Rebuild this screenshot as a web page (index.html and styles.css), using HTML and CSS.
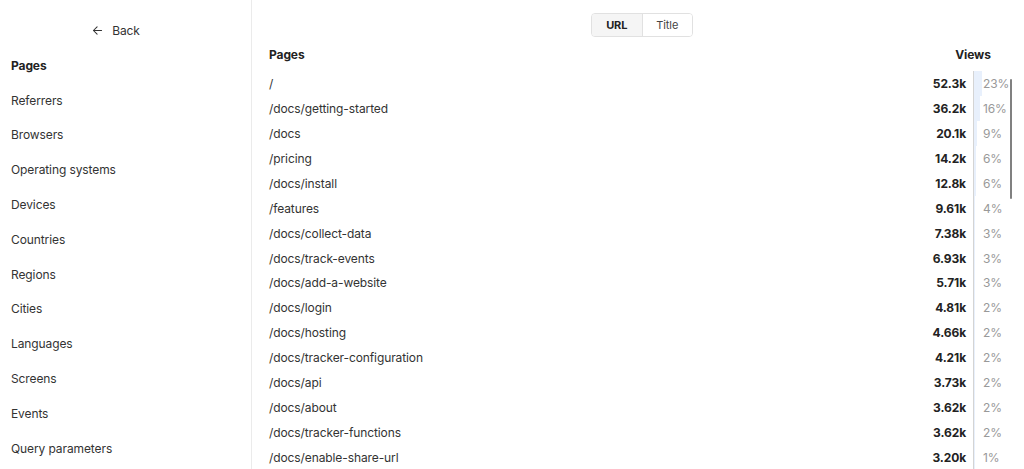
FILE: index.html
```html
<!DOCTYPE html>
<html lang="en">
<head>
<meta charset="utf-8">
<title>Pages</title>
<link rel="stylesheet" href="styles.css">
</head>
<body>
<div class="app">
  <aside class="sidebar">
    <div class="back">
      <svg class="back-icon" viewBox="0 0 16 16" width="13" height="13"><path d="M13 8H3M7.5 3.5L3 8l4.5 4.5" fill="none" stroke="currentColor" stroke-width="1.3" stroke-linecap="round" stroke-linejoin="round"/></svg>
      <span>Back</span>
    </div>
    <nav class="menu">
      <div class="menu-item active">Pages</div>
      <div class="menu-item">Referrers</div>
      <div class="menu-item">Browsers</div>
      <div class="menu-item">Operating systems</div>
      <div class="menu-item">Devices</div>
      <div class="menu-item">Countries</div>
      <div class="menu-item">Regions</div>
      <div class="menu-item">Cities</div>
      <div class="menu-item">Languages</div>
      <div class="menu-item">Screens</div>
      <div class="menu-item">Events</div>
      <div class="menu-item">Query parameters</div>
    </nav>
  </aside>
  <main class="main">
    <div class="toggle-wrap">
      <div class="toggle">
        <div class="toggle-btn selected">URL</div>
        <div class="toggle-btn">Title</div>
      </div>
    </div>
    <div class="table">
      <div class="thead">
        <div class="th-label">Pages</div>
        <div class="th-views">Views</div>
      </div>
      <div class="tbody">
        <div class="row"><div class="label">/</div><div class="value">52.3k</div><div class="pct"><div class="bar" style="width:23%"></div><span>23%</span></div></div>
        <div class="row"><div class="label">/docs/getting-started</div><div class="value">36.2k</div><div class="pct"><div class="bar" style="width:16%"></div><span>16%</span></div></div>
        <div class="row"><div class="label">/docs</div><div class="value">20.1k</div><div class="pct"><div class="bar" style="width:9%"></div><span>9%</span></div></div>
        <div class="row"><div class="label">/pricing</div><div class="value">14.2k</div><div class="pct"><div class="bar" style="width:6%"></div><span>6%</span></div></div>
        <div class="row"><div class="label">/docs/install</div><div class="value">12.8k</div><div class="pct"><div class="bar" style="width:6%"></div><span>6%</span></div></div>
        <div class="row"><div class="label">/features</div><div class="value">9.61k</div><div class="pct"><div class="bar" style="width:4%"></div><span>4%</span></div></div>
        <div class="row"><div class="label">/docs/collect-data</div><div class="value">7.38k</div><div class="pct"><div class="bar" style="width:3%"></div><span>3%</span></div></div>
        <div class="row"><div class="label">/docs/track-events</div><div class="value">6.93k</div><div class="pct"><div class="bar" style="width:3%"></div><span>3%</span></div></div>
        <div class="row"><div class="label">/docs/add-a-website</div><div class="value">5.71k</div><div class="pct"><div class="bar" style="width:3%"></div><span>3%</span></div></div>
        <div class="row"><div class="label">/docs/login</div><div class="value">4.81k</div><div class="pct"><div class="bar" style="width:2%"></div><span>2%</span></div></div>
        <div class="row"><div class="label">/docs/hosting</div><div class="value">4.66k</div><div class="pct"><div class="bar" style="width:2%"></div><span>2%</span></div></div>
        <div class="row"><div class="label">/docs/tracker-configuration</div><div class="value">4.21k</div><div class="pct"><div class="bar" style="width:2%"></div><span>2%</span></div></div>
        <div class="row"><div class="label">/docs/api</div><div class="value">3.73k</div><div class="pct"><div class="bar" style="width:2%"></div><span>2%</span></div></div>
        <div class="row"><div class="label">/docs/about</div><div class="value">3.62k</div><div class="pct"><div class="bar" style="width:2%"></div><span>2%</span></div></div>
        <div class="row"><div class="label">/docs/tracker-functions</div><div class="value">3.62k</div><div class="pct"><div class="bar" style="width:2%"></div><span>2%</span></div></div>
        <div class="row"><div class="label">/docs/enable-share-url</div><div class="value">3.20k</div><div class="pct"><div class="bar" style="width:1%"></div><span>1%</span></div></div>
      </div>
      <div class="scroll-thumb"></div>
    </div>
  </main>
</div>
</body>
</html>
```

FILE: styles.css
```css
html, body {
  margin: 0;
  padding: 0;
  background: #fff;
}
body {
  font-family: Inter, "Noto Sans", sans-serif;
  font-size: 12px;
  letter-spacing: -0.1px;
  color: #333;
  overflow: hidden;
  height: 469px;
}
.app {
  display: flex;
  height: 469px;
}
.sidebar {
  width: 251px;
  flex: none;
  border-right: 1px solid #ebebeb;
  display: flex;
  flex-direction: column;
}
.back {
  margin-top: 15px;
  height: 30px;
  padding-right: 20px;
  display: flex;
  align-items: center;
  justify-content: center;
  gap: 8px;
  color: #333;
  font-size: 12px;
}
.menu {
  display: flex;
  flex-direction: column;
  padding-top: 3px;
}
.menu-item {
  height: 34.8px;
  display: flex;
  align-items: center;
  padding-left: 11px;
  color: #333;
}
.menu-item.active {
  font-weight: 700;
  color: #222;
}
.main {
  flex: 1;
  padding: 0 14px 0 17px;
  display: flex;
  flex-direction: column;
}
.toggle-wrap {
  display: flex;
  justify-content: center;
  padding-top: 13px;
  padding-left: 5px;
}
.toggle {
  display: flex;
  border: 1px solid #e1e1e1;
  border-radius: 4px;
  overflow: hidden;
  height: 22px;
}
.toggle-btn {
  width: 49.5px;
  display: flex;
  align-items: center;
  justify-content: center;
  font-size: 11px;
  color: #444;
  background: #fff;
}
.toggle-btn + .toggle-btn {
  border-left: 1px solid #e1e1e1;
}
.toggle-btn.selected {
  background: #f5f5f5;
  font-weight: 700;
  color: #222;
}
.table {
  position: relative;
  display: flex;
  flex-direction: column;
}
.thead {
  display: flex;
  align-items: center;
  height: 34px;
  font-weight: 700;
  color: #222;
}
.th-label {
  flex: 1;
}
.th-views {
  width: 66px;
  text-align: center;
  margin-right: 4px;
}
.tbody {
  display: flex;
  flex-direction: column;
}
.row {
  display: flex;
  align-items: stretch;
  height: 24.95px;
}
.label {
  flex: 1;
  display: flex;
  align-items: center;
}
.value {
  width: 60px;
  padding-right: 7px;
  display: flex;
  align-items: center;
  justify-content: flex-end;
  font-weight: 700;
  color: #222;
}
.pct {
  position: relative;
  width: 36px;
  border-left: 1px solid #d4d4d4;
  display: flex;
  align-items: center;
  color: #999;
}
.pct span {
  position: relative;
  padding-left: 9px;
}
.bar {
  position: absolute;
  left: 0;
  top: 0;
  bottom: 0;
  background: #e8f0fc;
}
.scroll-thumb {
  position: absolute;
  right: -2px;
  top: 42px;
  width: 2px;
  height: 120px;
  background: #808080;
  border-radius: 1px;
}
```
